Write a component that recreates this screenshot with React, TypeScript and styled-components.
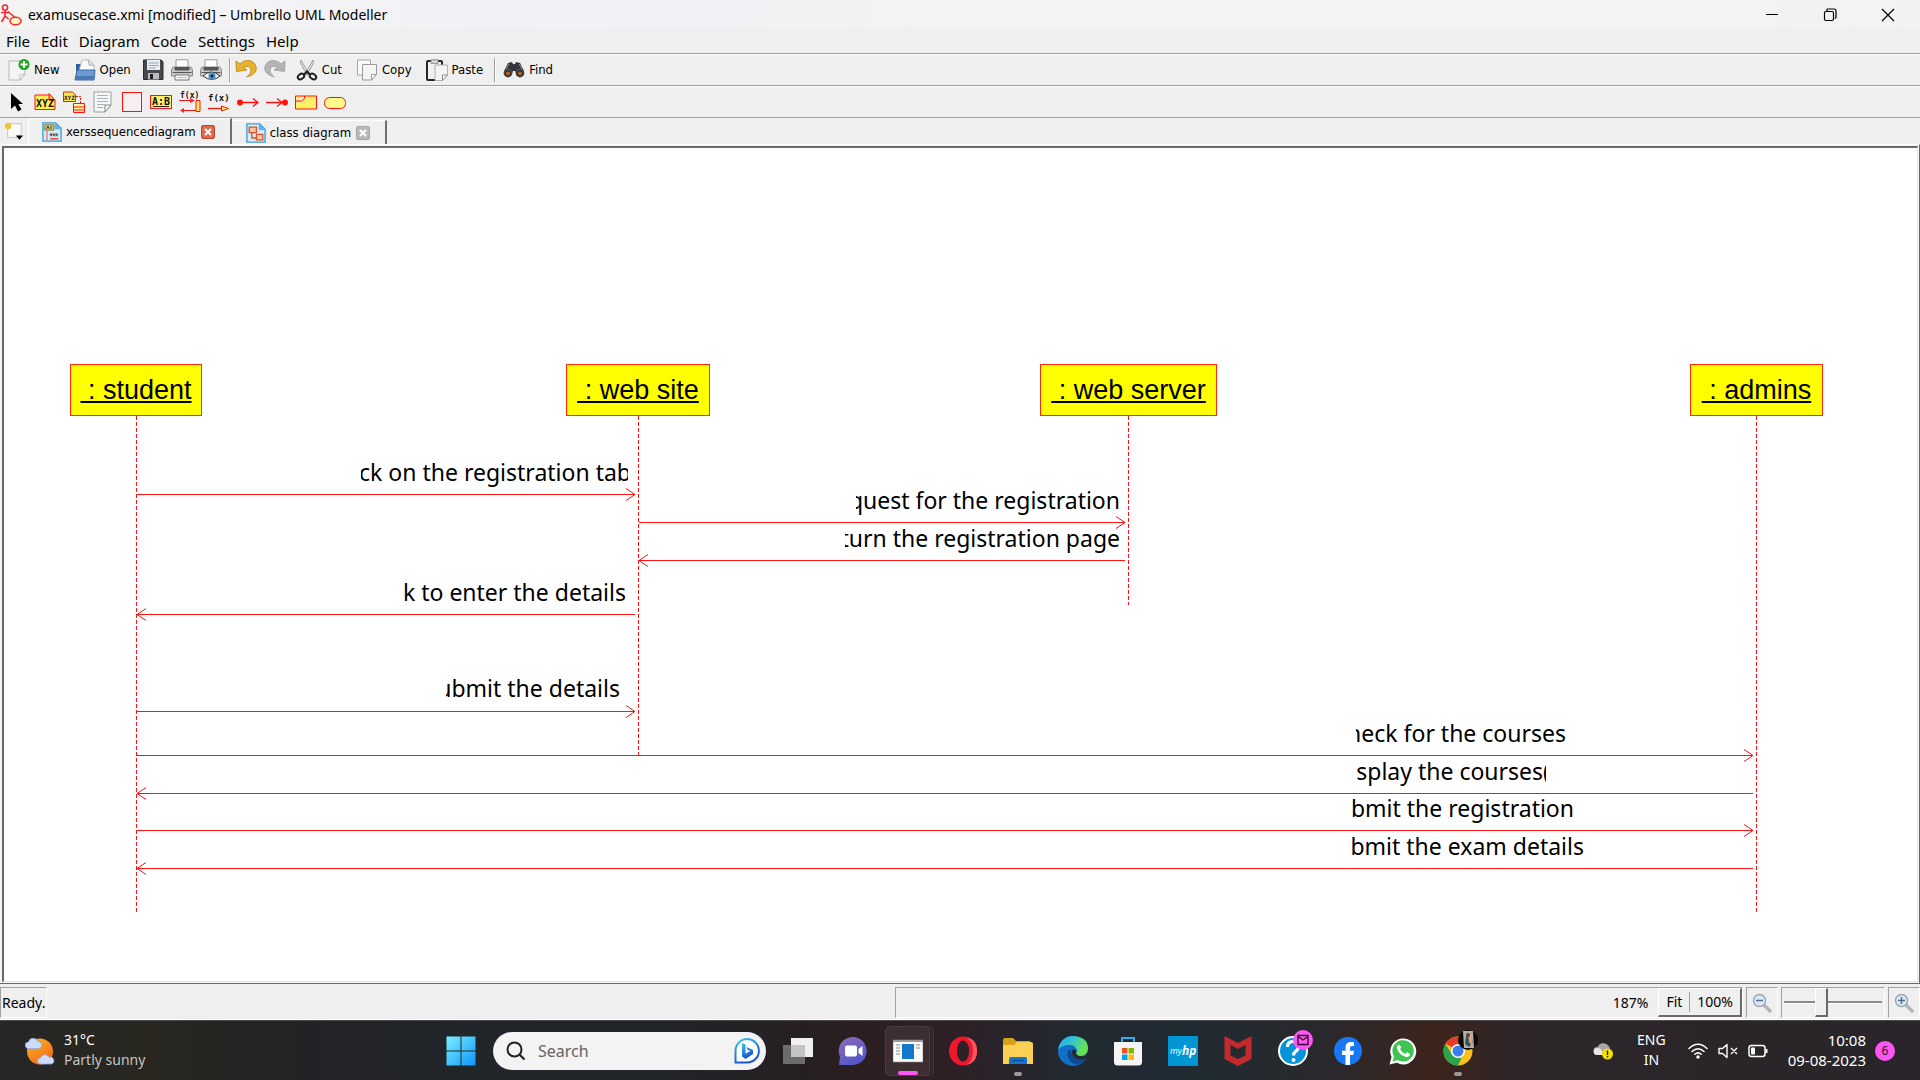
import React from "react";
import styled, { createGlobalStyle, css } from "styled-components";

const tahoma = `"DejaVu Sans Condensed", "Noto Sans", sans-serif`;
const segoe = `"Noto Sans", "Open Sans", sans-serif`;
const arial = `"Liberation Sans", Arial, sans-serif`;

const GlobalStyle = createGlobalStyle`
  *, *::before, *::after { box-sizing: border-box; }
  body { margin: 0; background: #efefef; color: #000; font-family: ${segoe}; font-size: 14px; }
  button, input { font: inherit; color: inherit; }
  svg { display: block; flex: none; }
`;

const Window = styled.div`
  display: flex;
  flex-direction: column;
  min-height: 100vh;
  overflow: hidden;
`;

const plainButton = css`
  border: 0;
  margin: 0;
  padding: 0;
  background: none;
  display: flex;
  align-items: center;
`;

/* ---------- title and menus ---------- */

const TitleBar = styled.header`
  display: flex;
  align-items: center;
  height: 29px;
  padding: 0 3px 0 1px;
  background: linear-gradient(90deg, #f5f4f3, #f1f1f6 30%, #f3f3f3 55%, #f1f4f0 88%, #f3f2f1);
`;

const Title = styled.h1`
  flex: 1;
  margin: 0 0 0 5px;
  font: 400 14px/20px ${segoe};
`;

const CaptionButton = styled.button`
  ${plainButton}
  justify-content: center;
  width: 58px;
  height: 28px;
`;

const MenuBar = styled.nav`
  display: flex;
  gap: 11px;
  height: 25px;
  padding-left: 6px;
  border-bottom: 1px solid #a0a0a0;
`;

const MenuItem = styled.button`
  ${plainButton}
  font-size: 15px;
  line-height: 20px;
`;

/* ---------- tool bars ---------- */

const ToolBar = styled.div`
  display: flex;
  align-items: center;
  height: 32px;
  padding-left: 1px;
  border-top: 1px solid #fff;
  border-bottom: 1px solid #a0a0a0;
`;

const ToolButton = styled.button<{ $labelled?: boolean }>`
  ${plainButton}
  gap: 4px;
  height: 28px;
  padding: ${(p) => (p.$labelled ? "0 7px" : "0 3px 0 4px")};
  font: 13px/16px ${tahoma};
`;

const ToolSeparator = styled.span`
  width: 2px;
  height: 24px;
  margin: 0 0 0 4px;
  border-left: 1px solid #a0a0a0;
  border-right: 1px solid #fff;
`;

/* ---------- tabs ---------- */

const TabBar = styled.div`
  display: flex;
  align-items: flex-end;
  height: 26px;
`;

const NewTab = styled.button`
  ${plainButton}
  align-self: center;
  width: 28px;
  padding-left: 4px;
`;

const Tab = styled.div<{ $active?: boolean }>`
  display: flex;
  align-items: center;
  height: ${(p) => (p.$active ? 26 : 24)}px;
  padding: 0 15px 0 13px;
  border-top: 1px solid #fff;
  border-left: 1px solid ${(p) => (p.$active ? "#fff" : "transparent")};
  border-right: 2px solid #6e6e6e;
`;

const TabLabel = styled.button`
  ${plainButton}
  gap: 4px;
  font: 13px/16px ${tahoma};
`;

const CloseTab = styled.button<{ $active?: boolean }>`
  ${plainButton}
  justify-content: center;
  width: 14px;
  height: 14px;
  margin-left: 5px;
  border: 1px solid ${(p) => (p.$active ? "#b9482f" : "#a5a5a5")};
  border-radius: 2px;
  background: ${(p) => (p.$active ? "#dc6a4e" : "#b9b9b9")};
`;

/* ---------- canvas ---------- */

const Frame = styled.main`
  flex: 1;
  display: flex;
  padding: 1px 1px 1px 2px;
  border-top: 1px solid #fff;
  border-right: 1px solid #696969;
  border-bottom: 1px solid #696969;
  background: #f4f4f4;
`;

const Canvas = styled.div`
  position: relative;
  flex: 1;
  min-height: 800px;
  overflow: hidden;
  background: #fff;
  border: 1px solid #e3e3e3;
  border-top: 2px solid #696969;
  border-left: 2px solid #696969;
`;

const Lines = styled.svg`
  position: absolute;
  left: 0;
  top: 0;
  width: 100%;
  height: 100%;
  stroke: #ff1414;
  fill: none;
`;

const ObjectBox = styled.div<{ $x: number; $w: number }>`
  position: absolute;
  left: ${(p) => p.$x}px;
  top: 216px;
  width: ${(p) => p.$w}px;
  height: 52px;
  display: flex;
  align-items: center;
  justify-content: center;
  border: 1px solid #ff2a00;
  background: #ffff00;
  font: 27px/32px ${arial};
  text-decoration: underline;
  text-decoration-thickness: 2px;
  text-underline-offset: 2px;
  white-space: pre;
`;

const Message = styled.div<{ $x: number; $y: number; $w: number; $cut?: number }>`
  position: absolute;
  left: ${(p) => p.$x}px;
  top: ${(p) => p.$y}px;
  width: ${(p) => p.$w}px;
  height: 32px;
  display: flex;
  justify-content: flex-end;
  overflow: hidden;
  font: 23px/32px ${segoe};
  white-space: nowrap;

  span { margin-right: ${(p) => -(p.$cut ?? 0)}px; }
`;

/* ---------- status bar ---------- */

const StatusBar = styled.footer`
  display: flex;
  justify-content: space-between;
  height: 36px;
  padding: 3px 0 1px;
  border-bottom: 1px solid #fff;
`;

const sunken = css`
  border: 1px solid;
  border-color: #a0a0a0 #fff #fff #a0a0a0;
`;

const StatusText = styled.div`
  ${sunken}
  display: flex;
  align-items: center;
  padding: 0 1px;
`;

const StatusRight = styled.div`
  display: flex;
  gap: 3px;
  width: 53.4%;
`;

const ZoomPanel = styled.div`
  ${sunken}
  flex: 1;
  display: flex;
  justify-content: flex-end;
  align-items: stretch;
  gap: 10px;

  output { align-self: center; }
`;

const ZoomButtons = styled.div`
  display: flex;
  align-items: center;
  border: 1px solid;
  border-color: #fff #696969 #696969 #fff;
  border-right-width: 2px;
  border-bottom-width: 2px;

  button + button { border-left: 1px solid #a0a0a0; }
`;

const ZoomButton = styled.button`
  ${plainButton}
  padding: 0 7px;
  line-height: 20px;
`;

const IconCell = styled.button`
  ${plainButton}
  ${sunken}
  justify-content: center;
  width: 32px;
`;

const SliderCell = styled.label`
  ${sunken}
  display: flex;
  width: 104px;
  padding: 0 2px;
`;

const Slider = styled.input`
  appearance: none;
  width: 100%;
  height: 29px;
  margin: 0;
  background: linear-gradient(#8a8a8a, #8a8a8a) 0 13px / 100% 2px no-repeat,
    linear-gradient(#fff, #fff) 0 15px / 100% 1px no-repeat;

  &::-webkit-slider-thumb {
    appearance: none;
    width: 13px;
    height: 29px;
    border: 1px solid;
    border-color: #fff #696969 #696969 #fff;
    border-right-width: 2px;
    border-bottom-width: 2px;
    background: #efefef;
  }
`;

/* ---------- taskbar ---------- */

const TaskBar = styled.div`
  display: flex;
  align-items: center;
  height: 60px;
  border-top: 1px solid #4a4a4a;
  color: #fff;
  background: linear-gradient(90deg, #262726 0%, #28261f 8%, #232327 16%, #21262a 24%, #21252a 34%,
    #261f21 42%, #301e22 48%, #222931 56%, #1f2a31 62%, #2a292d 69%, #3c241c 75%, #2d2529 79%, #29252a 100%);
`;

const Side = styled.div<{ $end?: boolean }>`
  flex: 1;
  display: flex;
  align-items: center;
  justify-content: ${(p) => (p.$end ? "flex-end" : "flex-start")};
  padding: ${(p) => (p.$end ? "0 25px 0 0" : "0 0 0 25px")};
`;

const Stack = styled.div<{ $align?: string; $muted?: boolean; $size?: number }>`
  display: flex;
  flex-direction: column;
  padding-bottom: 2px;
  text-align: ${(p) => p.$align ?? "left"};
  font-size: ${(p) => p.$size ?? 14}px;
  line-height: 20px;

  span:last-child { color: ${(p) => (p.$muted ? "#c4c4c2" : "#fff")}; }
`;

const WeatherText = styled(Stack)`
  margin-left: 9px;
`;

const Apps = styled.div`
  display: flex;
  align-items: center;
  margin-right: 2px;
`;

const AppButton = styled.button<{ $active?: boolean }>`
  ${plainButton}
  position: relative;
  justify-content: center;
  width: ${(p) => (p.$active ? 45 : 55)}px;
  height: 50px;
  ${(p) =>
    p.$active &&
    css`
      margin: 0 5px;
      border: 1px solid #4a3c40;
      border-radius: 5px;
      background: #3d2e32;
      box-shadow: 4px 0 0 -1px #32262a, 4px 0 0 0 #44363a;
    `}
`;

const Running = styled.span<{ $active?: boolean }>`
  position: absolute;
  bottom: 0;
  width: ${(p) => (p.$active ? 20 : 8)}px;
  height: 4px;
  border-radius: 2px;
  background: ${(p) => (p.$active ? "#ff55f5" : "#9b999b")};
`;

const Badge = styled.span<{ $bg: string }>`
  position: absolute;
  top: 4px;
  right: 7px;
  width: 20px;
  height: 20px;
  display: flex;
  align-items: center;
  justify-content: center;
  border-radius: 50%;
  background: ${(p) => p.$bg};
`;

const SearchBox = styled.label`
  display: flex;
  align-items: center;
  width: 273px;
  height: 38px;
  margin: 0 4px 0 5px;
  padding: 0 6px 0 13px;
  border-radius: 19px;
  background: #f3f3f3;
  color: #000;

  input {
    flex: 1;
    min-width: 0;
    margin-left: 12px;
    padding: 0;
    border: 0;
    outline: 0;
    background: none;
    font-size: 16px;
    line-height: 24px;
  }
  input::placeholder { color: #646464; opacity: 1; }
`;

const Tray = styled.button<{ $gap: number }>`
  ${plainButton}
  margin-right: ${(p) => p.$gap}px;
`;

const TrayIcons = styled.div`
  display: flex;
  align-items: center;
  gap: 10px;
  margin-right: 20px;
`;

const Count = styled.span`
  width: 20px;
  margin-left: 9px;
  border-radius: 50%;
  background: #ff55f5;
  color: #1c1c1c;
  font-size: 12px;
  line-height: 20px;
  text-align: center;
`;

/* ---------- icons ---------- */

const Icon = ({ size = 22, box = size, children }: { size?: number; box?: number; children: React.ReactNode }) => (
  <svg width={size} height={size} viewBox={`0 0 ${box} ${box}`} fill="none" aria-hidden="true">
    {children}
  </svg>
);

const iconText = { fontFamily: "DejaVu Sans Mono, monospace", fontWeight: 700, fill: "#111", stroke: "none" };

const Logo = () => (
  <Icon size={22}>
    <g stroke="#f5282d" strokeWidth="1.6">
      <circle cx="4" cy="3.6" r="2.6" fill="#fff" />
      <path d="M4 6.5v6M0 8.5h8M4 12l-3.5 6M4 12l3.5 3M7 7.500l7 6" />
      <ellipse cx="14.500" cy="17" rx="5.500" ry="3.800" fill="#ffffc0" />
    </g>
  </Icon>
);

const NewIcon = () => (
  <Icon>
    <path d="M1 2h16v13l-5 6H1z" fill="#f4f4f4" stroke="#b9b9b9" />
    <path d="M17 15l-5 6v-5z" fill="#fff" stroke="#b0b0b0" strokeWidth=".8" />
    <circle cx="16" cy="5.500" r="5.500" fill="#1fa31f" />
    <path d="M16 2v7M12.500 5.500h7" stroke="#fff" strokeWidth="2.200" />
  </Icon>
);
const OpenIcon = () => (
  <Icon>
    <path d="M2 5h5l2 2h11v9H2z" fill="#2f5f9c" />
    <path d="M8 1h7l5 5v9H4z" fill="#fafafa" stroke="#a9a9a9" strokeWidth=".8" />
    <path d="M14 1l1 5 5 .5" fill="#ddd" stroke="#999" strokeWidth=".7" />
    <path d="M3 11h18l-1 10H1z" fill="#6d9bd1" stroke="#3c6ba8" />
    <path d="M2 17h18l-.4 3.500H1.500z" fill="#4679b5" />
  </Icon>
);
const SaveIcon = () => (
  <Icon>
    <path d="M1.500 1h18L21 3v17.500H1.500z" fill="#46484d" stroke="#2b2c30" />
    <path d="M5 1h13v10H5z" fill="#e8eef5" />
    <path d="M6.500 4h10M6.500 6.500h10M6.500 9h7" stroke="#9aa5b5" />
    <path d="M6 14h11v6.500H6z" fill="#b8bbc0" />
    <path d="M8 15h3v5H8z" fill="#222" />
  </Icon>
);
const PrintIcon = () => (
  <Icon>
    <path d="M5 .8h12V10H5z" fill="#fff" stroke="#9a9a9a" />
    <path d="M2 8h18l1.500 3v6H.5v-6z" fill="#c9c9c9" stroke="#8a8a8a" />
    <path d="M4 8.500h14V11H4zM1.500 13.500h19" fill="#555" stroke="#555" />
    <path d="M4 16h14v5H4z" fill="#fafafa" stroke="#777" />
    <path d="M6 18.500h10" stroke="#bbb" />
  </Icon>
);
const PreviewIcon = () => (
  <Icon>
    <path d="M5 .8h12V10H5z" fill="#fff" stroke="#9a9a9a" />
    <path d="M2 8h18l1.500 3v6H.5v-6z" fill="#c9c9c9" stroke="#8a8a8a" />
    <path d="M4 8.500h14V11H4zM1.500 13.500h19" fill="#555" stroke="#555" />
    <path d="M3 17q8-8 17 0-8 7-17 0z" fill="#eef5fa" stroke="#333" />
    <circle cx="12" cy="17" r="3.600" fill="#4b93c9" />
    <circle cx="12" cy="17" r="1.500" fill="#123" />
  </Icon>
);
const UndoIcon = ({ grey }: { grey?: boolean }) => (
  <Icon>
    <g transform={grey ? "translate(22 0) scale(-1 1)" : undefined}>
      <path
        d="M1 2l.5 10.500L12 11 8.500 8.200Q15 5.500 16 11q.3 4-4.500 7Q22 15.500 21.300 8.500 19.500.8 11.500 1.500 7.500 2 5 5z"
        fill={grey ? "#b4b4b4" : "#e9b22c"}
        stroke={grey ? "#9c9c9c" : "#b98212"}
        strokeWidth=".8"
      />
    </g>
  </Icon>
);
const CutIcon = () => (
  <Icon>
    <path d="M5 1l8 14-2 1L4.500 4zM17 1L9 15l2 1L17.500 4z" fill="#e4e4e4" stroke="#8c8c8c" strokeWidth=".8" />
    <g stroke="#1d1d1d" strokeWidth="2">
      <ellipse cx="5" cy="17.500" rx="3.400" ry="2.500" transform="rotate(-35 5 17.500)" />
      <ellipse cx="17" cy="17.500" rx="3.400" ry="2.500" transform="rotate(35 17 17.500)" />
      <path d="M8 15.500l3-3 3 3" />
    </g>
  </Icon>
);
const CopyIcon = () => (
  <Icon>
    <path d="M1.500 1h13v15h-13z" fill="#fafafa" stroke="#a5a5a5" />
    <path d="M6.500 5.500h14v10l-5 5.500h-9z" fill="#f4f4f4" stroke="#9b9b9b" />
    <path d="M20.500 15.500h-5V21z" fill="#fff" stroke="#9b9b9b" />
  </Icon>
);
const PasteIcon = () => (
  <Icon>
    <rect x="1" y="2" width="15" height="19" rx="1" fill="#f0f0f0" stroke="#262626" strokeWidth="2" />
    <path d="M5 .8h7v3.500H5z" fill="#ddd" stroke="#8a8a8a" />
    <path d="M9 6h12.500v10l-5 5.500H9z" fill="#f4f4f4" stroke="#b0b0b0" />
    <path d="M21.500 16h-5v5.500z" fill="#fff" stroke="#8d8d8d" />
  </Icon>
);
const FindIcon = () => (
  <Icon>
    <path d="M5 4l4-1 1 2h2l1-2 4 1 4 8-3 5h-4l-2-5h-2l-2 5H4l-3-5z" fill="#33363b" />
    <circle cx="5" cy="14" r="4.400" fill="#4a4d52" />
    <circle cx="17" cy="14" r="4.400" fill="#4a4d52" />
    <circle cx="5" cy="14.500" r="2.700" fill="#b0601c" stroke="#1b1b1b" />
    <circle cx="17" cy="14.500" r="2.700" fill="#b0601c" stroke="#1b1b1b" />
    <path d="M6 5l-3 5M16 5l3 5" stroke="#8a8d92" />
  </Icon>
);

const SelectIcon = () => (
  <Icon>
    <path d="M6 3v16l4-3.500 3 6 3.500-2-3.200-5.500H18z" fill="#000" transform="translate(0 -1)" />
  </Icon>
);
const XyzIcon = () => (
  <Icon>
    <path d="M1 4h14l6 5v9.500H1z" fill="#ffee55" stroke="#f11" />
    <path d="M15 2.500V9h6z" fill="#ffb347" stroke="#f11" />
    <text x="2" y="16" fontSize="10" style={iconText}>XYZ</text>
  </Icon>
);
const XyzLinkIcon = () => (
  <Icon>
    <path d="M.5 1h9l3 3v6.500H.5z" fill="#ffee55" stroke="#f11" />
    <text x="1" y="9" fontSize="6" style={iconText}>XYZ</text>
    <path d="M13 5.500h4.500V12" stroke="#f11" strokeDasharray="2 1" />
    <path d="M10.500 12.500h11v9h-11zM10.500 16h11M10.500 19h11" fill="#fff7a0" stroke="#f11" />
  </Icon>
);
const NoteIcon = () => (
  <Icon>
    <path d="M2 1h17v13l-6 7H2z" fill="#f6f7f7" stroke="#9a9d9f" />
    <path d="M5 4.500h11M5 7.500h11M5 10.500h11M5 13.500h8M5 16.500h6" stroke="#a8b0b8" />
    <path d="M19 14h-6v7z" fill="#fff" stroke="#888" />
  </Icon>
);
const BoxIcon = () => (
  <Icon>
    <rect x="1.500" y="1.500" width="19" height="19" fill="#f7efef" stroke="#f11" />
  </Icon>
);
const AbIcon = () => (
  <Icon>
    <rect x=".5" y="4.500" width="21" height="13" fill="#fff06a" stroke="#f11" />
    <text x="2" y="13.500" fontSize="10" style={iconText}>A:B</text>
    <path d="M3 15.500h16" stroke="#222" />
  </Icon>
);
const SyncIcon = () => (
  <Icon>
    <text x="1" y="6.500" fontSize="8" style={iconText}>f(x)</text>
    <path d="M0 9.500h12M17 19.500H4" stroke="#f11" strokeWidth="1.200" />
    <path d="M11 7l5 2.500-5 2.500zM5 17v5l-4-2.500z" fill="#f22" />
    <path d="M17 9.500h4v11h-4z" fill="#ffee55" stroke="#f11" />
  </Icon>
);
const AsyncIcon = () => (
  <Icon>
    <text x="0" y="10" fontSize="9" style={iconText}>f(x)</text>
    <path d="M0 17.500h14" stroke="#f11" strokeWidth="1.300" />
    <path d="M13.500 15l7 2.500-7 2.500z" fill="#ff4" stroke="#f11" />
  </Icon>
);
const FoundIcon = () => (
  <Icon>
    <circle cx="3" cy="11.500" r="3" fill="#f11" />
    <path d="M3 11.500h18M16 7.500l5 4-5 4" stroke="#f11" strokeWidth="1.300" />
  </Icon>
);
const LostIcon = () => (
  <Icon>
    <circle cx="19" cy="11.500" r="3" fill="#f11" />
    <path d="M0 11.500h18M11 7.500l5 4-5 4" stroke="#f11" strokeWidth="1.300" />
  </Icon>
);
const FragmentIcon = () => (
  <Icon>
    <path d="M.5 5h21v13H.5zM.5 10h6l3-2.500V5" fill="#fff06a" stroke="#f11" />
  </Icon>
);
const PreconditionIcon = () => (
  <Icon>
    <rect x=".5" y="6.500" width="21" height="11" rx="5" fill="#fff98a" stroke="#f11" />
  </Icon>
);

const NewTabIcon = () => (
  <Icon size={20} box={22}>
    <path d="M4 3h15v10l-4 5H4z" fill="#fafafa" stroke="#c3c3c3" />
    <circle cx="4.500" cy="5.500" r="3.500" fill="#f4c430" />
    <path d="M13 16h8l-4 4.500z" fill="#000" />
  </Icon>
);
const SequenceIcon = () => (
  <Icon size={20} box={22}>
    <path d="M1 1h14l6 6v14H1z" fill="#d5ecf8" stroke="#3aa0d8" strokeWidth="1.500" />
    <path d="M14 1v7h7z" fill="#5cb4ea" />
    <path d="M3 3h10v6H3z" fill="#d8c878" stroke="#7a6d3c" />
    <path d="M5 7.500l1.500-3L8 7.500M10 4.500v3" stroke="#222" />
    <path d="M5.500 10v10" stroke="#e2735a" strokeWidth="1.400" />
    <path d="M8 12h10v4H8z" fill="#b9c3c8" />
    <path d="M9 14h2M12 14h2M15 14h2" stroke="#444" strokeWidth="2" />
    <path d="M9 18.500h9" stroke="#e2402b" strokeWidth="1.600" />
  </Icon>
);
const ClassIcon = () => (
  <Icon size={20} box={22}>
    <path d="M1 1h14l6 6v14H1z" fill="#d5ecf8" stroke="#3aa0d8" strokeWidth="1.500" />
    <path d="M14 1v7h7z" fill="#5cb4ea" />
    <path d="M3.500 4.500h8v6h-8zM11.500 12.500h7v6h-7z" fill="#f6c5a5" stroke="#d9502b" strokeWidth="1.400" />
    <path d="M6.500 10.500v6h5" stroke="#d9502b" strokeWidth="1.500" />
  </Icon>
);
const Cross = () => (
  <Icon size={8}>
    <path d="M1 1l6 6M7 1L1 7" stroke="#fff" strokeWidth="2" />
  </Icon>
);

const Magnifier = ({ plus }: { plus?: boolean }) => (
  <Icon size={20}>
    <path d="M12 12l6 6" stroke="#b5b5b5" strokeWidth="3.500" strokeLinecap="round" />
    <circle cx="7.500" cy="7.500" r="6" fill="#dbe8f5" stroke="#9aa7b5" strokeWidth="1.500" />
    <path d={plus ? "M4 7.500h7M7.500 4v7" : "M4 7.500h7"} stroke="#54708f" strokeWidth="1.500" />
  </Icon>
);

const WeatherIcon = () => (
  <Icon size={30}>
    <defs>
      <linearGradient id="sun" x1="0" y1="0" x2=".6" y2="1">
        <stop stopColor="#f7b731" />
        <stop offset="1" stopColor="#f46d12" />
      </linearGradient>
    </defs>
    <circle cx="15" cy="15.500" r="13" fill="url(#sun)" />
    <path d="M3.500 12.500a3.200 3.200 0 010-6.400 4.800 4.800 0 019.200-.6 3.600 3.600 0 011.500 7z" fill="#cfdcf8" stroke="#8fa9e6" strokeWidth=".8" />
    <path d="M15.500 28a3 3 0 010-6 4.600 4.600 0 018.600-.6A3.400 3.400 0 0126.500 28z" fill="#cfdcf8" stroke="#8fa9e6" strokeWidth=".8" />
  </Icon>
);
const StartIcon = () => (
  <Icon size={30}>
    <defs>
      <linearGradient id="win" x1="0" y1="0" x2="30" y2="30" gradientUnits="userSpaceOnUse">
        <stop stopColor="#7df3ff" />
        <stop offset="1" stopColor="#0a93fb" />
      </linearGradient>
    </defs>
    <path d="M.5.500h14v14H.5zM15.500.500h14v14h-14zM.5 15.500h14v14H.5zM15.500 15.500h14v14h-14z" fill="url(#win)" />
  </Icon>
);
const SearchIcon = () => (
  <Icon size={20}>
    <circle cx="8.500" cy="8.500" r="7" stroke="#222" strokeWidth="2" />
    <path d="M13.500 13.500l5 5" stroke="#222" strokeWidth="2.200" />
  </Icon>
);
const BingIcon = () => (
  <Icon size={26}>
    <defs>
      <linearGradient id="bing" x1="0" y1="0" x2=".4" y2="1">
        <stop stopColor="#35c5ee" />
        <stop offset="1" stopColor="#1c55c8" />
      </linearGradient>
    </defs>
    <path d="M1.500 24.500V13A11.700 11.700 0 1113.200 24.500z" fill="#fff" stroke="url(#bing)" strokeWidth="2" />
    <path d="M8 5l3.500 1.500v9l5-2.500-3-1-1-3L19 12v4l-7.500 5L8 18.500z" fill="url(#bing)" />
  </Icon>
);
const TaskViewIcon = () => (
  <Icon size={30}>
    <path d="M8 2h22v19H8z" fill="#f0f0f0" />
    <path d="M0 9h22v19H0z" fill="#6c6c6c" />
    <path d="M8 9h14v12H8z" fill="#c4c4c4" />
  </Icon>
);
const ChatIcon = () => (
  <Icon size={30}>
    <defs>
      <linearGradient id="chat" x1="0" y1="0" x2=".6" y2="1">
        <stop stopColor="#8f6cb5" />
        <stop offset="1" stopColor="#5057c9" />
      </linearGradient>
    </defs>
    <path d="M1 29l1-8A14 14 0 1115 29z" fill="url(#chat)" />
    <rect x="7" y="9.500" width="12" height="11" rx="2" fill="#fff" />
    <path d="M20.500 13l4-3v10l-4-3z" fill="#fff" />
  </Icon>
);
const WindowIcon = () => (
  <Icon size={30}>
    <path d="M0 4h30v22H0z" fill="#fbfbfb" stroke="#8f8f8f" strokeWidth=".6" />
    <path d="M0 4h30v2H0z" fill="#9a9a9a" />
    <path d="M9 8h12v15H9z" fill="#1279cf" />
    <path d="M3 9h4M3 12h4M3 15h4M3 18h4M23 9h4M23 12h4" stroke="#8a8a8a" />
  </Icon>
);
const OperaIcon = () => (
  <Icon size={30}>
    <ellipse cx="15" cy="15" rx="14" ry="14.500" fill="#f0162c" />
    <path d="M18 1q11 2 11 14t-11 14q7-4 7-14T18 1z" fill="#ff5560" />
    <ellipse cx="15" cy="15" rx="6.200" ry="10.500" fill="#2c2226" />
  </Icon>
);
const FolderIcon = () => (
  <Icon size={30}>
    <path d="M0 4q0-2 2-2h8l3 3h14v8H0z" fill="#d9a01a" />
    <path d="M0 9h11l3-3h14q2 0 2 2v20H0z" fill="#fcd055" />
    <path d="M6 28v-5q0-2 2-2h14q2 0 2 2v5z" fill="#1477cf" />
    <path d="M9 24.500h12" stroke="#0b4f97" strokeWidth="1.500" />
  </Icon>
);
const EdgeIcon = () => (
  <Icon size={30}>
    <defs>
      <linearGradient id="edge" x1="0" y1="0" x2="1" y2=".4">
        <stop stopColor="#27a9e6" />
        <stop offset=".5" stopColor="#33c6d0" />
        <stop offset="1" stopColor="#6be04f" />
      </linearGradient>
    </defs>
    <circle cx="15" cy="15" r="15" fill="#1170c6" />
    <path d="M0 13.500Q3 0 15.500 0 30 1 30 12.500 29 20 22 20q-5 0-4-3 2-2 0-5-3-4-9-3-6 1-9 4.500z" fill="url(#edge)" />
    <path d="M10.500 14q-3 6 2 11.500 6 5 13 .5l2-4q-8 3-12-1-3-3-2-6.500-2-1-3-.5z" fill="#0c4a94" />
    <path d="M18 17q1 4 9 3l3-4v5q-1 2-3 2-11 2-13-5-.5-4 2-5 3 1 2 4z" fill="#232a30" />
  </Icon>
);
const StoreIcon = () => (
  <Icon size={30}>
    <path d="M9 7V2h12v5" stroke="#2cb0f0" strokeWidth="2" />
    <path d="M1 6h28v20q0 3.500-3.500 3.500h-21Q1 29.500 1 26z" fill="#f4f4f4" />
    <path d="M9 12h5.500v5.500H9z" fill="#f25022" />
    <path d="M15.500 12H21v5.500h-5.500z" fill="#7fba00" />
    <path d="M9 18.500h5.500V24H9z" fill="#00a4ef" />
    <path d="M15.500 18.500H21V24h-5.500z" fill="#ffb900" />
  </Icon>
);
const HpIcon = () => (
  <Icon size={30}>
    <rect width="30" height="30" rx="1" fill="#0096d6" />
    <text x="2" y="18" fontSize="9" fontFamily="Open Sans, sans-serif" fontStyle="italic" fill="#fff">my</text>
    <text x="14" y="19" fontSize="12" fontFamily="Open Sans, sans-serif" fontStyle="italic" fontWeight="700" fill="#fff">hp</text>
  </Icon>
);
const McAfeeIcon = () => (
  <Icon size={30}>
    <path d="M1.500 0L15 7 28.500 0v23L15 30 1.500 23zM7.500 9v10.500L15 23l7.500-3.500V9L15 13z" fill="#c22a2c" fillRule="evenodd" />
  </Icon>
);
const HelpIcon = () => (
  <Icon size={30}>
    <circle cx="15" cy="15" r="14" fill="#0594da" stroke="#fff" strokeWidth="2" />
    <path d="M9.500 11q0-5.500 5.500-5.500t5.500 5q0 3-3 5-2 1.500-2 4" stroke="#fff" strokeWidth="3.200" />
    <circle cx="15.500" cy="24" r="2" fill="#fff" />
  </Icon>
);
const MailIcon = () => (
  <Icon size={12}>
    <path d="M1 1.500h10v9H1zM1 2.500L6 6l5-3.500" stroke="#2a0a2a" strokeWidth="1.300" />
  </Icon>
);
const FacebookIcon = () => (
  <Icon size={30}>
    <circle cx="15" cy="15" r="14" fill="#1877f2" />
    <path d="M12.500 29v-10H9v-4.300h3.500V11.500q0-5.500 5.500-5.500l3 .3V10h-2q-2 0-2 2v2.700h4l-.7 4.300H17v10z" fill="#fff" />
  </Icon>
);
const WhatsAppIcon = () => (
  <Icon size={30}>
    <path d="M1.500 28.500L3.500 21A13 13 0 119 26.800z" fill="#fff" />
    <path d="M4.500 25.500L6 20.500A10.700 10.700 0 119.500 24z" fill="#3fc351" />
    <path d="M11 8.500q-2.500 1-2 4 1.500 6 9 8.500 3.500.5 4-3L19 16l-1.500 2q-4-1.500-5.500-5l1.500-1.500z" fill="#fff" />
  </Icon>
);
const ChromeIcon = () => (
  <Icon size={30}>
    <circle cx="15" cy="15" r="14.500" fill="#fbc21b" />
    <path d="M15 15L2.500 7.500A14.500 14.500 0 0127.600 8H15z" fill="#e33b2e" />
    <path d="M15 29.500A14.500 14.500 0 012.400 7.800L9 18.500l6 3 3.500.5z" fill="#2ba24c" />
    <circle cx="15" cy="15" r="7" fill="#fff" />
    <circle cx="15" cy="15" r="5.500" fill="#3b7ded" />
  </Icon>
);
const AvatarIcon = () => (
  <Icon size={20}>
    <path d="M5 1h10l1 17H6z" fill="#b5aea2" />
    <path d="M8 6q3-2 4 1l3 5-4 5-4-3z" fill="#35525a" />
    <path d="M10 4l5 4-1 8-3-4z" fill="#d2a184" />
    <circle cx="10" cy="5" r="2" fill="#5c4032" />
  </Icon>
);
const CloudWarnIcon = () => (
  <Icon size={20}>
    <path d="M4.500 14a4 4 0 010-8Q7 1 12 2.500q4 1 5 5.500v6z" fill="#a7a7a7" />
    <path d="M4 14a3.500 3.500 0 01.5-7q5 0 5.500 7z" fill="#e6e6e6" />
    <circle cx="14.500" cy="13" r="5.500" fill="#f8df00" />
    <path d="M14.500 9.500v4.500M14.500 15v1.500" stroke="#222" strokeWidth="1.400" />
  </Icon>
);
const WifiIcon = () => (
  <Icon size={20}>
    <g stroke="#fff" strokeWidth="1.500" strokeLinecap="round">
      <path d="M1 7.500Q10-1 19 7.500M4 10.500q6-5.500 12 0M6.800 13.300q3.200-2.800 6.400 0" />
    </g>
    <circle cx="10" cy="16" r="1.700" fill="#fff" />
  </Icon>
);
const MuteIcon = () => (
  <Icon size={20}>
    <path d="M1 7.500h3.500L9 3.500v13l-4.500-4H1zM13 7l6 6M19 7l-6 6" stroke="#fff" strokeWidth="1.400" strokeLinejoin="round" />
  </Icon>
);
const BatteryIcon = () => (
  <Icon size={20}>
    <rect x="1" y="4.500" width="16" height="11" rx="2.500" stroke="#fff" strokeWidth="1.500" />
    <rect x="3" y="6.500" width="4" height="7" rx="1" fill="#fff" />
    <path d="M18.500 8v4" stroke="#fff" strokeWidth="2" />
  </Icon>
);

/* ---------- data ---------- */

const menus = ["File", "Edit", "Diagram", "Code", "Settings", "Help"];

const tools: [string, () => React.JSX.Element][] = [
  ["Select", SelectIcon],
  ["Object", XyzIcon],
  ["Create message", XyzLinkIcon],
  ["Note", NoteIcon],
  ["Box", BoxIcon],
  ["Text", AbIcon],
  ["Synchronous message", SyncIcon],
  ["Asynchronous message", AsyncIcon],
  ["Found message", FoundIcon],
  ["Lost message", LostIcon],
  ["Combined fragment", FragmentIcon],
  ["Precondition", PreconditionIcon],
];

const objects = [
  { name: " : student", x: 66, w: 132, life: 132, end: 765 },
  { name: " : web site", x: 562, w: 144, life: 634, end: 607 },
  { name: " : web server", x: 1036, w: 177, life: 1124, end: 457 },
  { name: " : admins", x: 1686, w: 133, life: 1752, end: 765 },
];

const arrows = [
  { y: 346, from: 133, to: 631 },
  { y: 374, from: 635, to: 1121 },
  { y: 412, from: 1121, to: 635 },
  { y: 466, from: 631, to: 133 },
  { y: 563, from: 133, to: 631 },
  { y: 607, from: 133, to: 1749 },
  { y: 645, from: 1749, to: 133 },
  { y: 682, from: 133, to: 1749 },
  { y: 720, from: 1749, to: 133 },
];

const messages = [
  { text: "ck on the registration tab", x: 357, y: 308, w: 267, cut: 3 },
  { text: "quest for the registration", x: 852, y: 336, w: 264 },
  { text: "turn the registration page", x: 841, y: 374, w: 275 },
  { text: "k to enter the details", x: 397, y: 428, w: 225 },
  { text: "ubmit the details", x: 442, y: 524, w: 174 },
  { text: "heck for the courses", x: 1352, y: 569, w: 210 },
  { text: "splay the courses(", x: 1352, y: 607, w: 190, cut: 4 },
  { text: "bmit the registration", x: 1347, y: 644, w: 223 },
  { text: "bmit the exam details", x: 1347, y: 682, w: 233 },
];

const apps: { label: string; icon: React.ReactNode; active?: boolean; running?: boolean; badge?: [string, React.ReactNode] }[] = [
  { label: "Task view", icon: <TaskViewIcon /> },
  { label: "Chat", icon: <ChatIcon /> },
  { label: "Umbrello", icon: <WindowIcon />, active: true, running: true },
  { label: "Opera", icon: <OperaIcon /> },
  { label: "File Explorer", icon: <FolderIcon />, running: true },
  { label: "Edge", icon: <EdgeIcon /> },
  { label: "Store", icon: <StoreIcon /> },
  { label: "myHP", icon: <HpIcon /> },
  { label: "McAfee", icon: <McAfeeIcon /> },
  { label: "HP Support", icon: <HelpIcon />, badge: ["#ff55f5", <MailIcon key="m" />] },
  { label: "Facebook", icon: <FacebookIcon /> },
  { label: "WhatsApp", icon: <WhatsAppIcon /> },
  { label: "Chrome", icon: <ChromeIcon />, running: true, badge: ["#0b0b0b", <AvatarIcon key="a" />] },
];

const Labelled = ({ icon, children }: { icon: React.ReactNode; children: string }) => (
  <ToolButton $labelled>
    {icon}
    {children}
  </ToolButton>
);

export default function App() {
  return (
    <Window>
      <GlobalStyle />
      <TitleBar>
        <Logo />
        <Title>examusecase.xmi [modified] – Umbrello UML Modeller</Title>
        <CaptionButton aria-label="Minimize">
          <Icon size={14}><path d="M1 6.500h12" stroke="#000" /></Icon>
        </CaptionButton>
        <CaptionButton aria-label="Restore">
          <Icon size={14}>
            <path d="M4 3V1.500q0-.5.500-.5H11q2 0 2 2v6q0 1-1 1.500" stroke="#000" strokeWidth="1.200" />
            <rect x="1.500" y="3.500" width="9" height="9" rx="1.500" stroke="#000" strokeWidth="1.200" />
          </Icon>
        </CaptionButton>
        <CaptionButton aria-label="Close">
          <Icon size={14}><path d="M1 1l12 12M13 1L1 13" stroke="#000" strokeWidth="1.200" /></Icon>
        </CaptionButton>
      </TitleBar>

      <MenuBar>
        {menus.map((m) => <MenuItem key={m}>{m}</MenuItem>)}
      </MenuBar>

      <ToolBar>
        <Labelled icon={<NewIcon />}>New</Labelled>
        <Labelled icon={<OpenIcon />}>Open</Labelled>
        <ToolButton aria-label="Save"><SaveIcon /></ToolButton>
        <ToolButton aria-label="Print"><PrintIcon /></ToolButton>
        <ToolButton aria-label="Print preview"><PreviewIcon /></ToolButton>
        <ToolSeparator />
        <ToolButton aria-label="Undo"><UndoIcon /></ToolButton>
        <ToolButton aria-label="Redo"><UndoIcon grey /></ToolButton>
        <Labelled icon={<CutIcon />}>Cut</Labelled>
        <Labelled icon={<CopyIcon />}>Copy</Labelled>
        <Labelled icon={<PasteIcon />}>Paste</Labelled>
        <ToolSeparator />
        <Labelled icon={<FindIcon />}>Find</Labelled>
      </ToolBar>

      <ToolBar>
        {tools.map(([label, Glyph]) => (
          <ToolButton key={label} aria-label={label}><Glyph /></ToolButton>
        ))}
      </ToolBar>

      <TabBar>
        <NewTab aria-label="New diagram"><NewTabIcon /></NewTab>
        <Tab $active>
          <TabLabel><SequenceIcon />xerssequencediagram</TabLabel>
          <CloseTab $active aria-label="Close xerssequencediagram"><Cross /></CloseTab>
        </Tab>
        <Tab>
          <TabLabel><ClassIcon />class diagram</TabLabel>
          <CloseTab aria-label="Close class diagram"><Cross /></CloseTab>
        </Tab>
      </TabBar>

      <Frame>
        <Canvas>
          <Lines>
            {objects.map((o) => (
              <path key={o.name} d={`M${o.life + 0.5} 268V${o.end}`} strokeDasharray="4 2" />
            ))}
            {arrows.map((a) => {
              const back = a.to > a.from ? -9 : 9;
              return (
                <path
                  key={a.y}
                  d={`M${a.from} ${a.y + 0.5}H${a.to}M${a.to + back} ${a.y - 5.5}L${a.to} ${a.y + 0.5}L${a.to + back} ${a.y + 6.5}`}
                />
              );
            })}
          </Lines>
          {objects.map((o) => (
            <ObjectBox key={o.name} $x={o.x} $w={o.w}>{o.name}</ObjectBox>
          ))}
          {messages.map((m) => (
            <Message key={m.text} $x={m.x} $y={m.y} $w={m.w} $cut={m.cut}>
              <span>{m.text}</span>
            </Message>
          ))}
        </Canvas>
      </Frame>

      <StatusBar>
        <StatusText>Ready.</StatusText>
        <StatusRight>
          <ZoomPanel>
            <output>187%</output>
            <ZoomButtons>
              <ZoomButton>Fit</ZoomButton>
              <ZoomButton>100%</ZoomButton>
            </ZoomButtons>
          </ZoomPanel>
          <IconCell aria-label="Zoom out"><Magnifier /></IconCell>
          <SliderCell>
            <Slider type="range" aria-label="Zoom" min={0} max={100} defaultValue={37} />
          </SliderCell>
          <IconCell aria-label="Zoom in"><Magnifier plus /></IconCell>
        </StatusRight>
      </StatusBar>

      <TaskBar>
        <Side>
          <WeatherIcon />
          <WeatherText $muted>
            <span>31°C</span>
            <span>Partly sunny</span>
          </WeatherText>
        </Side>
        <Apps>
          <AppButton aria-label="Start"><StartIcon /></AppButton>
          <SearchBox>
            <SearchIcon />
            <input type="text" placeholder="Search" aria-label="Search" />
            <BingIcon />
          </SearchBox>
          {apps.map((a) => (
            <AppButton key={a.label} aria-label={a.label} $active={a.active}>
              {a.icon}
              {a.running && <Running $active={a.active} />}
              {a.badge && <Badge $bg={a.badge[0]}>{a.badge[1]}</Badge>}
            </AppButton>
          ))}
        </Apps>
        <Side $end>
          <Tray $gap={24} aria-label="Weather alert"><CloudWarnIcon /></Tray>
          <Tray $gap={22}>
            <Stack $align="center"><span>ENG</span><span>IN</span></Stack>
          </Tray>
          <TrayIcons>
            <WifiIcon />
            <MuteIcon />
            <BatteryIcon />
          </TrayIcons>
          <Stack $align="right" $size={15}><span>10:08</span><span>09-08-2023</span></Stack>
          <Count>6</Count>
        </Side>
      </TaskBar>
    </Window>
  );
}
